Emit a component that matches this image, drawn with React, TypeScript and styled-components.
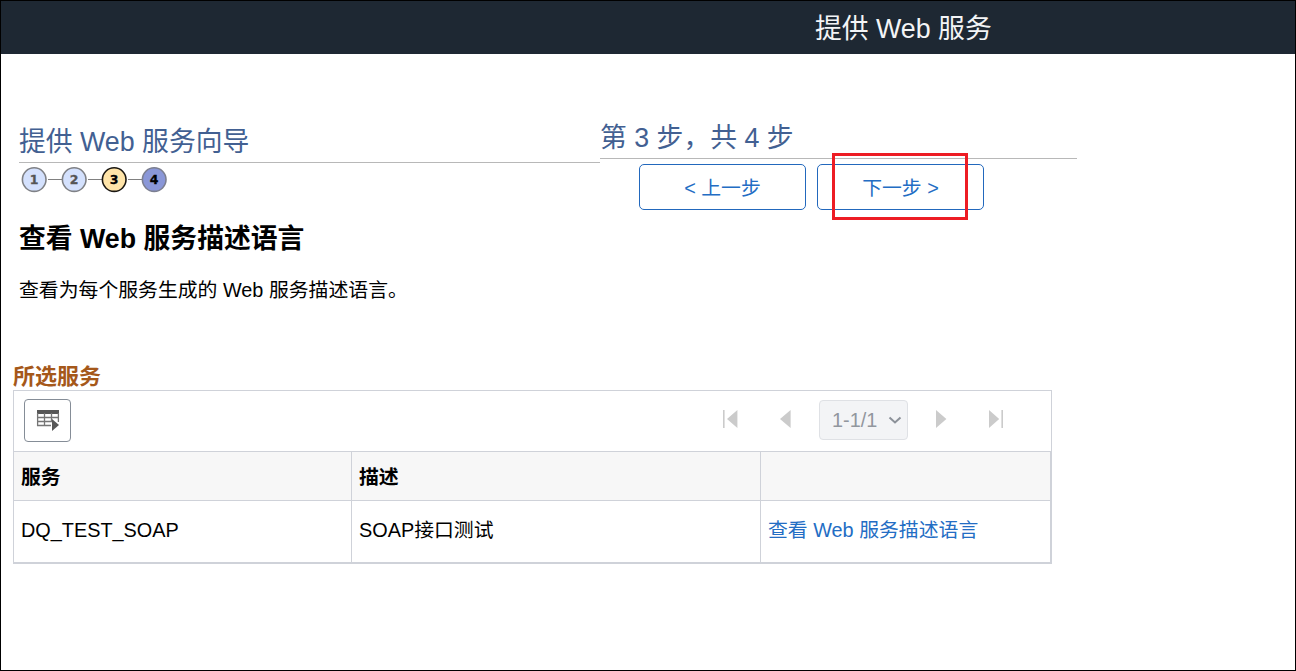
import React from "react";
import styled, { createGlobalStyle } from "styled-components";

const GlobalStyle = createGlobalStyle`
  * { box-sizing: border-box; }
  body { margin: 0; background: #fff; }
`;

const Frame = styled.div`
  width: 1296px;
  height: 671px;
  border: 1px solid #000;
  background: #fff;
  color: #000;
  font-family: "Liberation Sans", "Noto Sans CJK SC", sans-serif;
  font-size: 19.85px;
  overflow: hidden;
  white-space: nowrap;
`;

const TopBar = styled.header`
  height: 53px;
  padding-left: 814px;
  background: #1e2833;
  color: #f3f4f6;
  font-size: 26.8px;
  line-height: 57px;
`;

const WizardHead = styled.section`
  display: flex;
  align-items: flex-start;
  padding: 64px 0 0 18px;
  height: 157px;
`;

const Column = styled.div<{ $width: number }>`
  width: ${(p) => p.$width}px;
`;

const WizardTitle = styled.div<{ $height: number }>`
  display: flex;
  align-items: flex-end;
  height: ${(p) => p.$height}px;
  border-bottom: 1px solid #b8b8b8;
  color: #426092;
  font-size: 26.8px;
  line-height: 40px;
`;

const Steps = styled.svg`
  display: block;
  margin: 3px 0 0 2px;
`;

const ButtonRow = styled.div`
  display: flex;
  gap: 11px;
  padding: 5px 0 0 39px;
`;

const WizardButton = styled.button`
  position: relative;
  width: 167px;
  height: 46px;
  padding: 0;
  border: 1px solid #2268bd;
  border-radius: 5px;
  background: #fff;
  color: #236dc4;
  font: inherit;
  line-height: 46px;
`;

const Highlight = styled.span`
  position: absolute;
  left: 14px;
  top: -12px;
  width: 136px;
  height: 67px;
  border: 3px solid #ed1c24;
  pointer-events: none;
`;

const PageTitle = styled.h1`
  margin: 0;
  padding-left: 18px;
  height: 54px;
  font-size: 26.8px;
  line-height: 56px;
`;

const Intro = styled.p`
  margin: 0;
  padding-left: 18px;
  height: 50px;
  line-height: 50px;
`;

const GridTitle = styled.h2`
  margin: 46px 0 0;
  padding-left: 12px;
  height: 29px;
  color: #a5581a;
  font-size: 22px;
  line-height: 31px;
`;

const GridPanel = styled.section`
  width: 1039px;
  margin-left: 12px;
  border: 1px solid #cfd2d9;
`;

const Toolbar = styled.div`
  display: flex;
  justify-content: space-between;
  height: 60px;
  padding: 8px 47px 0 10px;
`;

const MenuButton = styled.button`
  display: flex;
  align-items: center;
  justify-content: center;
  width: 47px;
  height: 43px;
  padding: 0;
  border: 1px solid #858d97;
  border-radius: 4px;
  background: #fff;
`;

const Pager = styled.nav`
  display: flex;
  align-items: flex-start;
  padding-top: 1px;
`;

const NavIcon = styled.svg<{ $gap: number }>`
  display: block;
  margin: 10px ${(p) => p.$gap}px 0 0;
  fill: #cbcbcb;
`;

const RangeSelect = styled.div`
  display: flex;
  align-items: center;
  justify-content: space-between;
  width: 89px;
  height: 40px;
  margin-right: 28px;
  padding: 0 5px 0 12px;
  border: 1px solid #dfe1e5;
  border-radius: 4px;
  background: #f3f4f6;
  color: #92979e;
`;

const Table = styled.div`
  border-top: 1px solid #cfd2d9;
  border-right: 1px solid #cfd2d9;
  border-bottom: 1px solid #cfd2d9;
`;

const Row = styled.div<{ $head?: boolean }>`
  display: grid;
  grid-template-columns: 338px 409px 1fr;
  height: ${(p) => (p.$head ? 49 : 61)}px;
  line-height: ${(p) => (p.$head ? 51 : 58)}px;
  background: ${(p) => (p.$head ? "#f7f7f7" : "#fff")};
  font-weight: ${(p) => (p.$head ? 700 : 400)};
  border-bottom: ${(p) => (p.$head ? "1px solid #cfd2d9" : "0")};
`;

const Cell = styled.div`
  padding-left: 7px;
  border-right: 1px solid #cfd2d9;
  &:last-child { border-right: 0; }
`;

const ServiceLink = styled.a`
  color: #236dc4;
  text-decoration: none;
`;

const steps = [
  { n: 1, fill: "#d4e1fd", stroke: "#7f8186", text: "#555" },
  { n: 2, fill: "#d4e1fd", stroke: "#7f8186", text: "#555" },
  { n: 3, fill: "#ffe4a8", stroke: "#1b1712", text: "#000" },
  { n: 4, fill: "#8a97d8", stroke: "#7c7f90", text: "#000" },
];

function StepTrain() {
  return (
    <Steps width="148" height="28" viewBox="0 0 148 28">
      <path d="M27 13.500h14M67 13.500h14M107 13.500h14" stroke="#808080" strokeWidth="1.2" />
      {steps.map((s, i) => (
        <g key={s.n}>
          <circle cx={13.2 + i * 40} cy="13.6" r="11.8" fill={s.fill} stroke={s.stroke} strokeWidth="1.6" />
          <text
            x={13.2 + i * 40}
            y="18.2"
            textAnchor="middle"
            fontFamily="'DejaVu Sans', sans-serif"
            fontWeight="700"
            fontSize="12.5"
            fill={s.text}
            stroke={s.text}
            strokeWidth="0.3"
          >
            {s.n}
          </text>
        </g>
      ))}
    </Steps>
  );
}

function GridIcon() {
  return (
    <svg width="24" height="24" viewBox="0 0 24 24">
      <path d="M1 1h22v4H1z" fill="#575757" />
      <path
        d="M1.600 4v13M8.500 4v13M15.500 4v8M22.400 4v9M1 8.500h22M1 12.500h15M1 16.500h14"
        stroke="#757575"
        strokeWidth="1.300"
        fill="none"
      />
      <path d="M16 10l7 6-7 6z" fill="#575757" />
    </svg>
  );
}

export default function App() {
  return (
    <>
      <GlobalStyle />
      <Frame lang="zh-CN">
        <TopBar>提供 Web 服务</TopBar>
        <WizardHead>
          <Column $width={581}>
            <WizardTitle $height={45}>提供 Web 服务向导</WizardTitle>
            <StepTrain />
          </Column>
          <Column $width={477}>
            <WizardTitle $height={41}>第 3 步，共 4 步</WizardTitle>
            <ButtonRow>
              <WizardButton>&lt; 上一步</WizardButton>
              <WizardButton>
                下一步 &gt;
                <Highlight />
              </WizardButton>
            </ButtonRow>
          </Column>
        </WizardHead>
        <PageTitle>查看 Web 服务描述语言</PageTitle>
        <Intro>查看为每个服务生成的 Web 服务描述语言。</Intro>
        <GridTitle>所选服务</GridTitle>
        <GridPanel>
          <Toolbar>
            <MenuButton aria-label="网格操作">
              <GridIcon />
            </MenuButton>
            <Pager>
              <NavIcon $gap={42} width="15" height="18" viewBox="0 0 15 18">
                <path d="M0 0h1.600v18H0zM14.400 0v18L4 9z" />
              </NavIcon>
              <NavIcon $gap={28} width="11" height="18" viewBox="0 0 11 18">
                <path d="M10.600 0v18L0 9z" />
              </NavIcon>
              <RangeSelect>
                1-1/1
                <svg width="14" height="10" viewBox="0 0 14 10">
                  <path d="M1.500 2.500L7 7.500l5.500-5" fill="none" stroke="#8c9199" strokeWidth="2" />
                </svg>
              </RangeSelect>
              <NavIcon $gap={42} width="11" height="18" viewBox="0 0 11 18">
                <path d="M0 0l10.400 9L0 18z" />
              </NavIcon>
              <NavIcon $gap={0} width="15" height="18" viewBox="0 0 15 18">
                <path d="M0 0l10.200 9L0 18zM12.400 0h1.600v18h-1.600z" />
              </NavIcon>
            </Pager>
          </Toolbar>
          <Table>
            <Row $head>
              <Cell>服务</Cell>
              <Cell>描述</Cell>
              <Cell />
            </Row>
            <Row>
              <Cell>DQ_TEST_SOAP</Cell>
              <Cell>SOAP接口测试</Cell>
              <Cell>
                <ServiceLink>查看 Web 服务描述语言</ServiceLink>
              </Cell>
            </Row>
          </Table>
        </GridPanel>
      </Frame>
    </>
  );
}
